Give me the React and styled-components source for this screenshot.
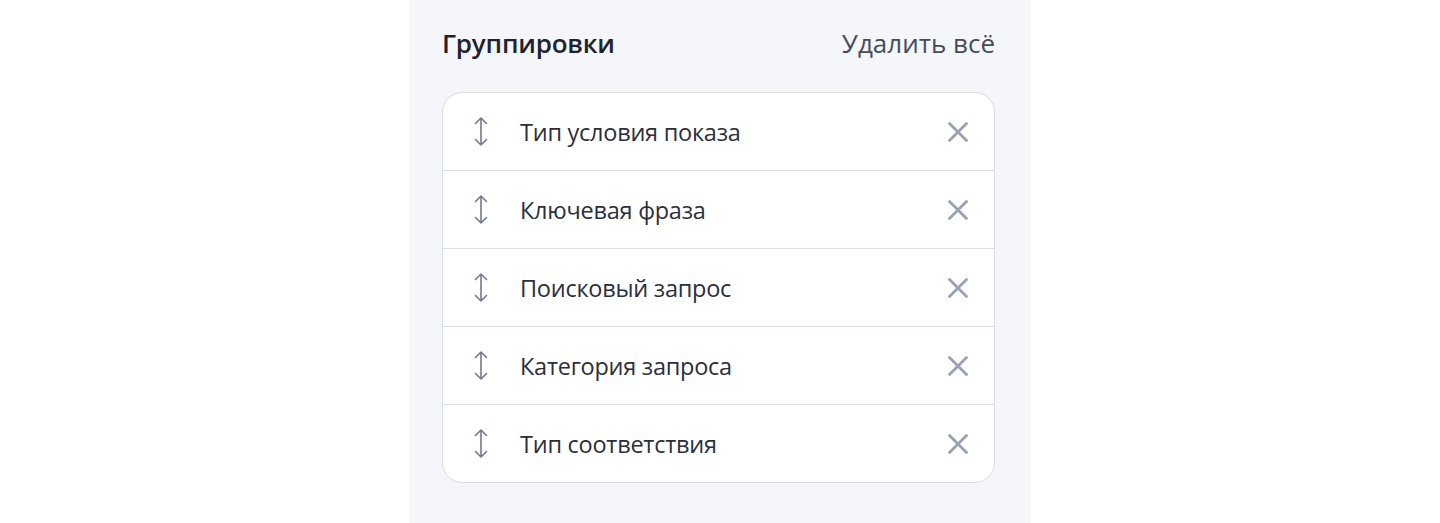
import React from "react";
import styled, { createGlobalStyle } from "styled-components";

const Global = createGlobalStyle`
  html, body { margin: 0; padding: 0; background: #ffffff; }
  body { font-family: "Open Sans", "Noto Sans", sans-serif; }
`;

const Panel = styled.div`
  width: 622px;
  height: 523px;
  margin: 0 auto;
  box-sizing: border-box;
  background: #f5f6f9;
  padding: 25px 36px 0 33px;
`;

const Header = styled.div`
  display: flex;
  align-items: center;
  justify-content: space-between;
  height: 36px;
  margin-bottom: 31px;
`;

const Title = styled.h2`
  margin: 0;
  font-size: 26px;
  font-weight: 600;
  color: #1f2330;
  letter-spacing: -0.2px;
`;

const Clear = styled.button`
  border: 0;
  background: none;
  padding: 0;
  font-family: inherit;
  font-size: 26px;
  font-weight: 400;
  color: #464c5c;
  cursor: pointer;
`;

const Card = styled.div`
  background: #ffffff;
  border: 1px solid #d9dce4;
  border-radius: 20px;
  overflow: hidden;
`;

const Row = styled.div`
  display: flex;
  align-items: center;
  height: 77px;
  padding: 0 25px 0 31px;
  border-top: ${(p) => (p.$first ? "0" : "1px solid #dcdfe6")};
`;

const Handle = styled.span`
  display: flex;
  width: 14px;
  margin-right: 32px;
  color: #727990;
`;

const Label = styled.span`
  flex: 1;
  font-size: 23.5px;
  color: #2b2f3b;
  letter-spacing: -0.25px;
`;

const Remove = styled.button`
  display: flex;
  border: 0;
  background: none;
  padding: 0;
  color: #9aa0b3;
  cursor: pointer;
`;

const ArrowIcon = () => (
  <svg width="14" height="31" viewBox="0 0 14 31" fill="none">
    <path d="M7 2v27M1.5 7.5L7 2l5.5 5.5M1.5 23.5L7 29l5.5-5.5" stroke="currentColor" strokeWidth="1.6" strokeLinecap="round" strokeLinejoin="round" />
  </svg>
);

const CloseIcon = () => (
  <svg width="22" height="22" viewBox="0 0 22 22" fill="none">
    <path d="M2.5 2.5l17 17M19.5 2.5l-17 17" stroke="currentColor" strokeWidth="2.8" strokeLinecap="round" />
  </svg>
);

const items = [
  "Тип условия показа",
  "Ключевая фраза",
  "Поисковый запрос",
  "Категория запроса",
  "Тип соответствия",
];

export default function App() {
  return (
    <>
      <Global />
      <Panel>
        <Header>
          <Title>Группировки</Title>
          <Clear>Удалить всё</Clear>
        </Header>
        <Card>
          {items.map((t, i) => (
            <Row key={t} $first={i === 0}>
              <Handle><ArrowIcon /></Handle>
              <Label>{t}</Label>
              <Remove aria-label="Удалить"><CloseIcon /></Remove>
            </Row>
          ))}
        </Card>
      </Panel>
    </>
  );
}
